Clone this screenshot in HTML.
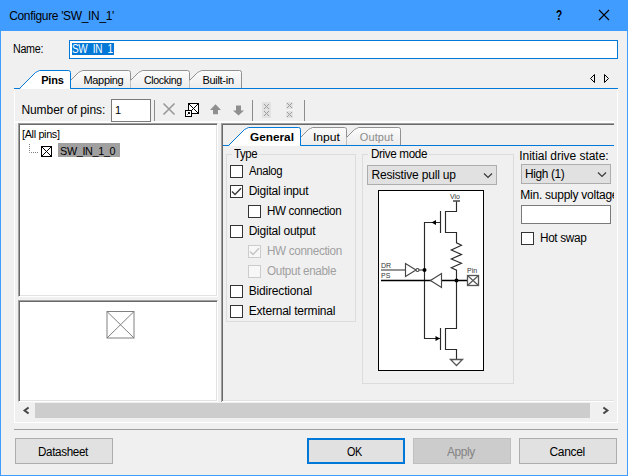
<!DOCTYPE html>
<html><head><meta charset="utf-8"><title>Configure 'SW_IN_1'</title>
<style>
*{box-sizing:border-box;margin:0;padding:0}
html,body{width:628px;height:476px;overflow:hidden;background:#f0f0f0}
body{position:relative;font-family:"Liberation Sans",sans-serif;font-size:12px;color:#000}
.a{position:absolute}
.t{position:absolute;white-space:nowrap;line-height:14px;transform-origin:0 0}
.s11{font-size:11px}
.cb{position:absolute;width:13px;height:13px;border:1px solid #333;background:#fff}
.cb.d{border-color:#ccc;background:#f7f7f7}
.btn{position:absolute;top:438px;height:26px;width:98px;border:1px solid #adadad;background:#e1e1e1}
.gb{position:absolute;border:1px solid #dcdcdc}
.gl{position:absolute;background:#f0f0f0;height:12px}
.combo{position:absolute;border:1px solid #adadad;background:#e1e1e1}
.sep{position:absolute;width:1px;background:#8c8c8c;top:100px;height:21px}
.sunk{position:absolute;background:#fff;border:1px solid #fff;border-top-color:#a0a0a0;border-left-color:#a0a0a0;box-shadow:inset 1px 1px 0 #696969, inset -1px -1px 0 #e3e3e3}
</style></head><body>
<!-- window frame -->
<div class="a" style="left:0;top:0;width:628px;height:476px;border:1px solid #409cff;border-top:0"></div>
<div class="a" style="left:0;top:0;width:628px;height:31px;background:#409cff"></div>
<div class="t" style="left:9.2px;top:8px;letter-spacing:-0.339px;line-height:16px">Configure 'SW_IN_1'</div>
<div class="t" style="left:555.500px;top:7px;font-size:14px;line-height:16px;font-weight:bold;transform:scaleX(.72)">?</div>
<svg class="a" style="left:598px;top:9px" width="12" height="12" viewBox="0 0 12 12"><path d="M1 1L11 11M11 1L1 11" stroke="#000" stroke-width="1.1" fill="none"/></svg>

<!-- name row -->
<div class="t" style="left:13.2px;top:42px;letter-spacing:-0.35px;transform:scaleX(0.8956);">Name:</div>
<div class="a" style="left:69px;top:40px;width:549px;height:19px;border:1px solid #0078d7;background:#fff"></div>
<div class="a" style="left:72px;top:43px;width:41.500px;height:12px;background:#0078d7"></div>
<div class="t" style="left:72.0px;top:42px;letter-spacing:-0.35px;transform:scaleX(0.831);color:#fff">SW_IN_1</div>

<!-- outer tab control -->
<div class="a" style="left:14px;top:88px;width:604px;height:1px;background:#0078d7"></div>
<div class="a" style="left:14px;top:89px;width:1px;height:334px;background:#fff"></div>
<div class="a" style="left:617px;top:89px;width:1px;height:334px;background:#fff"></div>
<div class="a" style="left:14px;top:422px;width:604px;height:1px;background:#fff"></div>
<svg class="a" style="left:10px;top:66px" width="240" height="24" viewBox="10 66 240 24">
  <defs><linearGradient id="tg" x1="0" y1="0" x2="0" y2="1"><stop offset="0" stop-color="#fff"/><stop offset="1" stop-color="#f7f7f7"/></linearGradient>
  <linearGradient id="ug" x1="0" y1="0" x2="0" y2="1"><stop offset="0" stop-color="#fcfcfc"/><stop offset="1" stop-color="#ececec"/></linearGradient></defs>
  <path d="M70.5 80.5 L78.5 72.5 L80.5 71.5 L82.5 70.5 L128.5 70.5 Q130.5 70.5 130.5 72.5 L130.5 88 L70.5 88 Z" fill="url(#ug)" stroke="none"/>
  <path d="M70.5 80.5 L78.5 72.5 L80.5 71.5 L82.5 70.5 L128.5 70.5 Q130.5 70.5 130.5 72.5 L130.5 88" fill="none" stroke="#919191"/>
  <path d="M130.5 80.5 L138.5 72.5 L140.5 71.5 L142.5 70.5 L187.5 70.5 Q189.5 70.5 189.5 72.5 L189.5 88 L130.5 88 Z" fill="url(#ug)" stroke="none"/>
  <path d="M130.5 80.5 L138.5 72.5 L140.5 71.5 L142.5 70.5 L187.5 70.5 Q189.5 70.5 189.5 72.5 L189.5 88" fill="none" stroke="#919191"/>
  <path d="M189.5 80.5 L197.5 72.5 L199.5 71.5 L201.5 70.5 L239.5 70.5 Q241.5 70.5 241.5 72.5 L241.5 88 L189.5 88 Z" fill="url(#ug)" stroke="none"/>
  <path d="M189.5 80.5 L197.5 72.5 L199.5 71.5 L201.5 70.5 L239.5 70.5 Q241.5 70.5 241.5 72.5 L241.5 88" fill="none" stroke="#919191"/>
  <path d="M14 88.5 L19.5 88.5 L35.5 72.5 L37.5 71.5 L39.5 70.5 L68.5 70.5 Q70.5 70.5 70.5 72.5 L70.5 88.5" fill="#fff" stroke="#0078d7"/>
  <path d="M20.5 88.5 L70.0 88.5" stroke="#fdfdfd"/>
</svg>
<div class="t" style="left:41.2px;top:73px;letter-spacing:-0.171px;font-size:11px;font-weight:bold">Pins</div>
<div class="t" style="left:83.5px;top:73px;letter-spacing:-0.33px;font-size:11px">Mapping</div>
<div class="t" style="left:143.7px;top:73px;letter-spacing:-0.35px;transform:scaleX(0.9617);font-size:11px">Clocking</div>
<div class="t" style="left:202.4px;top:73px;letter-spacing:-0.286px;font-size:11px">Built-in</div>
<svg class="a" style="left:588px;top:72px" width="24" height="13" viewBox="588 72 24 13">
  <path d="M594.500 74.500 L594.500 82.500 L590.500 78.500 Z" fill="#f0f0f0" stroke="#000"/>
  <path d="M604.500 74.500 L604.500 82.500 L608.500 78.500 Z" fill="#f0f0f0" stroke="#000"/>
</svg>

<!-- toolbar -->
<div class="a" style="left:15px;top:121px;width:599px;height:2px;background:#fdfdfd"></div>
<div class="t" style="left:21.4px;top:103px;letter-spacing:-0.055px;">Number of pins:</div>
<div class="a" style="left:111px;top:99px;width:40px;height:23px;border:1px solid #7a7a7a;background:#fff"></div>
<div class="t" style="left:115px;top:103px;font-size:11px">1</div>
<div class="sep" style="left:154px"></div>
<div class="sep" style="left:252px"></div>
<div class="sep" style="left:304px"></div>
<svg class="a" style="left:160px;top:98px" width="140" height="24" viewBox="160 98 140 24">
  <path d="M163.500 103.500 L174.500 114.500 M174.500 103.500 L163.500 114.500" stroke="#999" stroke-width="1.600" fill="none"/>
  <rect x="188.500" y="103.500" width="10" height="10" fill="#fff" stroke="#000"/>
  <path d="M188.500 103.500 L198.500 113.500 M198.500 103.500 L188.500 113.500" stroke="#000" stroke-width="1"/>
  <rect x="185.500" y="110.500" width="6" height="6" fill="#fff" stroke="#000"/>
  <path d="M187.500 114.500 L189.500 112.500 M188 112.500 L189.500 112.500 L189.500 114" stroke="#000" stroke-width="1" fill="none"/>
  <path d="M215.500 104.300 L221 110 L218 110 L218 114.300 L213 114.300 L213 110 L210 110 Z" fill="#8f8f8f"/>
  <path d="M238.500 115.500 L244 110.500 L241 110.500 L241 105.500 L236 105.500 L236 110.500 L233 110.500 Z" fill="#8f8f8f"/>
  <rect x="262" y="102" width="9" height="16" fill="#e2e2e2"/>
  <g stroke="#9c9c9c" fill="none" stroke-width="1">
    <path d="M264 104l5 5m0 -5l-5 5"/>
    <path d="M264 111l5 5m0 -5l-5 5"/>
  </g>
  <rect x="286" y="102" width="7" height="7" fill="#e2e2e2"/>
  <rect x="286" y="111" width="7" height="7" fill="#e2e2e2"/>
  <g stroke="#9c9c9c" fill="none" stroke-width="1">
    <path d="M287 103l5 5m0 -5l-5 5"/>
    <path d="M287 112l5 5m0 -5l-5 5"/>
  </g>
</svg>

<!-- left tree panel -->
<div class="sunk" style="left:18px;top:123px;width:200px;height:174px"></div>
<div class="t" style="left:22.2px;top:128px;letter-spacing:-0.35px;transform:scaleX(0.9879);font-size:11px;line-height:13px">[All pins]</div>
<svg class="a" style="left:26px;top:140px" width="30" height="20" viewBox="26 140 30 20">
  <path d="M29.500 144 L29.500 152.500 L39 152.500" stroke="#808080" stroke-dasharray="1 1" fill="none"/>
  <rect x="41.500" y="146.500" width="10" height="10" fill="#fff" stroke="#000"/>
  <path d="M41.500 146.500 L51.500 156.500 M51.500 146.500 L41.500 156.500" stroke="#000"/>
</svg>
<div class="a" style="left:58px;top:143px;width:62px;height:14px;background:#a0a0a0"></div>
<div class="t" style="left:60.4px;top:145px;letter-spacing:-0.35px;transform:scaleX(0.9842);font-size:11px;line-height:13px">SW_IN_1_0</div>

<!-- left preview panel -->
<div class="sunk" style="left:18px;top:300px;width:200px;height:102px"></div>
<svg class="a" style="left:105px;top:309px" width="32" height="32" viewBox="105 309 32 32">
  <rect x="107" y="311.500" width="27" height="26.500" fill="#fff" stroke="#808080"/>
  <path d="M107 311.500 L134 338 M134 311.500 L107 338" stroke="#808080"/>
</svg>

<!-- right panel -->
<div class="a" style="left:221px;top:123px;width:393px;height:1px;background:#a0a0a0"></div>
<div class="a" style="left:221px;top:123px;width:1px;height:279px;background:#a0a0a0"></div>
<div class="a" style="left:222px;top:124px;width:392px;height:1px;background:#696969"></div>
<div class="a" style="left:222px;top:124px;width:1px;height:277px;background:#696969"></div>
<div class="a" style="left:223px;top:400px;width:391px;height:1px;background:#e3e3e3"></div>
<div class="a" style="left:222px;top:401px;width:392px;height:1px;background:#fff"></div>
<div class="a" style="left:223px;top:145px;width:391px;height:1px;background:#0078d7"></div>
<svg class="a" style="left:222px;top:124px" width="190" height="24" viewBox="222 124 190 24">
  <path d="M300.5 137.5 L308.5 129.5 L310.5 128.5 L312.5 127.5 L344.5 127.5 Q346.5 127.5 346.5 129.5 L346.5 145 L300.5 145 Z" fill="url(#ug)" stroke="none"/>
  <path d="M300.5 137.5 L308.5 129.5 L310.5 128.5 L312.5 127.5 L344.5 127.5 Q346.5 127.5 346.5 129.5 L346.5 145" fill="none" stroke="#919191"/>
  <path d="M346.5 137.5 L354.5 129.5 L356.5 128.5 L358.5 127.5 L398.5 127.5 Q400.5 127.5 400.5 129.5 L400.5 145 L346.5 145 Z" fill="url(#ug)" stroke="none"/>
  <path d="M346.5 137.5 L354.5 129.5 L356.5 128.5 L358.5 127.5 L398.5 127.5 Q400.5 127.5 400.5 129.5 L400.5 145" fill="none" stroke="#919191"/>
  <path d="M223 145.5 L228.5 145.5 L244.5 129.5 L246.5 128.5 L248.5 127.5 L298.5 127.5 Q300.5 127.5 300.5 129.5 L300.5 145.5" fill="#fff" stroke="#0078d7"/>
  <path d="M229.5 145.5 L300.0 145.5" stroke="#fdfdfd"/>
</svg>
<div class="t" style="left:250.0px;top:130px;letter-spacing:0.0px;transform:scaleX(1.0731);font-size:11px;font-weight:bold">General</div>
<div class="t" style="left:312.8px;top:130px;letter-spacing:0.0px;transform:scaleX(1.1021);font-size:11px">Input</div>
<div class="t" style="left:359.8px;top:130px;letter-spacing:0.107px;font-size:11px;color:#8c8c8c">Output</div>

<!-- Type group -->
<div class="gb" style="left:226px;top:154px;width:130px;height:168px"></div>
<div class="gl" style="left:232px;top:148px;width:27px"></div>
<div class="t" style="left:234.0px;top:147px;letter-spacing:-0.35px;transform:scaleX(0.9489);">Type</div>
<div class="cb" style="left:230px;top:165px"></div><div class="t" style="left:248.7px;top:164px;letter-spacing:-0.35px;transform:scaleX(0.9444);">Analog</div>
<div class="cb" style="left:230px;top:185px"></div><div class="t" style="left:248.7px;top:184px;letter-spacing:-0.239px;">Digital input</div>
<div class="cb" style="left:248px;top:205px"></div><div class="t" style="left:266.7px;top:204px;letter-spacing:-0.35px;transform:scaleX(0.9674);">HW connection</div>
<div class="cb" style="left:230px;top:225px"></div><div class="t" style="left:248.7px;top:224px;letter-spacing:-0.239px;">Digital output</div>
<div class="cb d" style="left:248px;top:245px"></div><div class="t" style="left:266.6px;top:244px;letter-spacing:-0.35px;transform:scaleX(0.9752);color:#a0a0a0">HW connection</div>
<div class="cb d" style="left:248px;top:265px"></div><div class="t" style="left:266.6px;top:264px;letter-spacing:-0.35px;transform:scaleX(0.9746);color:#a0a0a0">Output enable</div>
<div class="cb" style="left:230px;top:285px"></div><div class="t" style="left:248.7px;top:284px;letter-spacing:-0.167px;">Bidirectional</div>
<div class="cb" style="left:230px;top:305px"></div><div class="t" style="left:248.7px;top:304px;letter-spacing:-0.204px;">External terminal</div>
<svg class="a" style="left:230px;top:185px" width="13" height="13"><path d="M2 6.500 L5 9.500 L11 3.300" stroke="#3a3a3a" stroke-width="1.400" fill="none"/></svg>
<svg class="a" style="left:248px;top:245px" width="13" height="13"><path d="M2 6.500 L5 9.500 L11 3.300" stroke="#c4c4c4" stroke-width="1.400" fill="none"/></svg>

<!-- Drive mode group -->
<div class="gb" style="left:362px;top:154px;width:152px;height:230px"></div>
<div class="gl" style="left:368px;top:148px;width:61px"></div>
<div class="t" style="left:370.7px;top:147px;letter-spacing:-0.35px;transform:scaleX(0.9704);">Drive mode</div>
<div class="combo" style="left:367px;top:165px;width:130px;height:20px"></div>
<div class="t" style="left:371.5px;top:168px;letter-spacing:-0.181px;">Resistive pull up</div>
<svg class="a" style="left:483px;top:172px" width="10" height="7"><path d="M1 1.500 L5 5.500 L9 1.500" stroke="#3a3a3a" stroke-width="1.200" fill="none"/></svg>
<svg class="a" style="left:378px;top:190px" width="107" height="181" viewBox="378 190 107 181" font-family="Liberation Sans, sans-serif">
  <rect x="378.500" y="190.500" width="105" height="180" fill="#fff" stroke="#000"/>
  <g stroke="#2a2a2a" fill="none" stroke-width="1.150">
    <path d="M453 201 L460 201" stroke-width="1.500" stroke="#444"/>
    <path d="M456.500 201.500 L456.500 211.500 L445.500 211.500 L445.500 232.500 L456.500 232.500 L456.500 242.800 L461.500 245.300 L451.300 250 L461.500 254.400 L451.300 259 L461.500 263.300 L451.300 267.800 L456.500 270.100 L456.500 328.500 L445.500 328.500 L445.500 349.500 L456.500 349.500 L456.500 359.500"/>
    <path d="M440.500 211 L440.500 233"/>
    <path d="M440.500 328 L440.500 350"/>
    <path d="M440.500 222.500 L424.500 222.500 L424.500 338.500 L440.500 338.500"/>
    <path d="M381 270 L405.500 270" stroke="#666" stroke-width="1.400"/>
    <path d="M405.500 263.500 L405.500 276.500 L416 270 Z" fill="#fff" stroke="#444"/>
    <circle cx="417.500" cy="270" r="1.500" fill="#fff" stroke="#444"/>
    <path d="M419 270 L424.500 270" stroke="#444"/>
    <path d="M381 280.500 L467.500 280.500" stroke="#000" stroke-width="1.300"/>
    <path d="M430.500 280.500 L441.500 273.500 L441.500 287.500 Z" fill="#fff" stroke="#444"/>
    <path d="M450.500 359.500 L462.500 359.500 L456.500 365.500 Z" fill="#fff" stroke="#555" stroke-width="1.300"/>
    <rect x="467.500" y="275.500" width="11" height="10" fill="#fff" stroke="#555" stroke-width="1.300"/>
    <path d="M467.500 275.500 L478.500 285.500 M478.500 275.500 L467.500 285.500" stroke="#555"/>
  </g>
  <path d="M431.500 222.500 L436 220 L436 225 Z" fill="#000"/>
  <path d="M440 338.500 L435.500 336 L435.500 341 Z" fill="#000"/>
  <circle cx="424.500" cy="270" r="2" fill="#000"/>
  <circle cx="456.500" cy="280.500" r="2" fill="#000"/>
  <text x="450" y="198.600" font-size="7" fill="#333">Vio</text>
  <text x="381" y="267.800" font-size="7" fill="#333">DR</text>
  <text x="381" y="278.300" font-size="7" fill="#333">PS</text>
  <text x="467" y="273" font-size="7" fill="#333">Pin</text>
</svg>

<!-- right column -->
<div class="t" style="left:519.3px;top:149px;letter-spacing:-0.037px;">Initial drive state:</div>
<div class="a" style="left:519px;top:188px;width:95px;height:16px;overflow:hidden">
  <div class="t" style="left:1.300px;top:0;letter-spacing:-.25px">Min. supply voltage:</div>
</div>
<div class="combo" style="left:521px;top:164px;width:90px;height:20px"></div>
<div class="t" style="left:525.3px;top:167px;letter-spacing:-0.35px;transform:scaleX(0.9892);">High (1)</div>
<svg class="a" style="left:597px;top:171px" width="10" height="7"><path d="M1 1.500 L5 5.500 L9 1.500" stroke="#3a3a3a" stroke-width="1.200" fill="none"/></svg>
<div class="a" style="left:521px;top:205px;width:90px;height:19px;border:1px solid #7a7a7a;background:#fff"></div>
<div class="cb" style="left:521px;top:232px"></div><div class="t" style="left:539.5px;top:231px;letter-spacing:-0.35px;transform:scaleX(0.9813);">Hot swap</div>

<!-- scrollbar -->
<div class="a" style="left:35px;top:403px;width:555px;height:15px;background:#cdcdcd"></div>
<svg class="a" style="left:21px;top:405px" width="10" height="11"><path d="M7.600 2.500 L3.600 5.500 L7.600 8.500" stroke="#454545" stroke-width="2" fill="none"/></svg>
<svg class="a" style="left:601px;top:405px" width="10" height="11"><path d="M2.400 2.500 L6.400 5.500 L2.400 8.500" stroke="#454545" stroke-width="2" fill="none"/></svg>

<!-- bottom -->
<div class="a" style="left:14px;top:429px;width:604px;height:1px;background:#a0a0a0"></div>
<div class="btn" style="left:15px"></div><div class="t" style="left:38.2px;top:445px;letter-spacing:-0.35px;transform:scaleX(0.9702);">Datasheet</div>
<div class="btn" style="left:307px;border:2px solid #0078d7"></div><div class="t" style="left:347.3px;top:445px;letter-spacing:-0.35px;transform:scaleX(0.9008);">OK</div>
<div class="btn" style="left:413px;background:#cccccc;border-color:#bfbfbf"></div><div class="t" style="left:447.2px;top:445px;letter-spacing:-0.35px;transform:scaleX(0.9889);color:#838383">Apply</div>
<div class="btn" style="left:519px"></div><div class="t" style="left:549.5px;top:445px;letter-spacing:-0.317px;">Cancel</div>
</body></html>
